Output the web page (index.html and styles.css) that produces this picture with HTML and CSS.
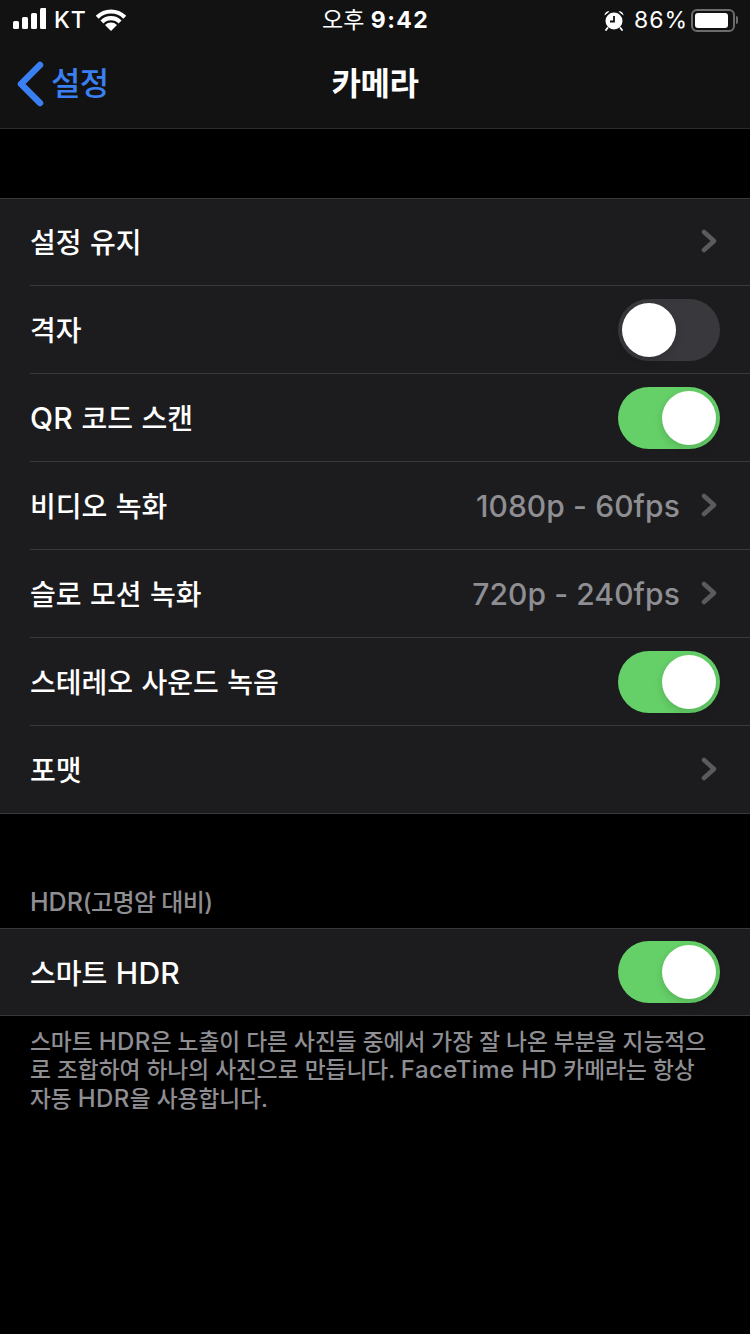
FILE: index.html
```html
<!DOCTYPE html>
<html lang="ko">
<head>
<meta charset="utf-8">
<title>카메라</title>
<link rel="stylesheet" href="styles.css">
</head>
<body>
<header class="top">
  <div class="status">
    <div class="status-left">
      <svg class="signal" width="33" height="22" viewBox="0 0 33 22"><rect x="0" y="13" width="6" height="8" rx="1.5"/><rect x="9" y="9" width="6" height="12" rx="1.5"/><rect x="18" y="5" width="6" height="16" rx="1.5"/><rect x="27" y="0" width="6.500" height="21" rx="1.5"/></svg>
      <span class="carrier">KT</span>
      <svg class="wifi" width="30" height="22" viewBox="0 0 30 22"><path class="wifi-fan" d="M15 22L9 16A8.500 8.500 0 0 1 21 16Z"/><path class="wifi-arc" d="M5.950 12.950A12.800 12.800 0 0 1 24.050 12.950"/><path class="wifi-arc" d="M1.200 8.200A19.500 19.500 0 0 1 28.800 8.200"/></svg>
    </div>
    <div class="clock">오후 <b>9:42</b></div>
    <div class="status-right">
      <svg class="alarm" width="22" height="22" viewBox="0 0 22 22"><circle cx="11" cy="12" r="8.500" fill="#fff"/><path d="M1.500 6.500a4 4 0 0 1 5-4zM20.500 6.500a4 4 0 0 0-5-4z" fill="#fff"/><path d="M4.500 19l-1.500 2M17.500 19l1.500 2" stroke="#fff" stroke-width="1.800" stroke-linecap="round"/><path d="M11 7v5.500H7" stroke="#111" stroke-width="1.800" fill="none"/></svg>
      <span class="percent">86%</span>
      <div class="battery"><div class="battery-fill"></div></div>
      <div class="battery-cap"></div>
    </div>
  </div>
  <nav class="nav">
    <a class="back">
      <svg width="28" height="46" viewBox="0 0 28 46"><path d="M24 4L5 23l19 19" fill="none" stroke="#3a80f2" stroke-width="6.500" stroke-linecap="round" stroke-linejoin="round"/></svg>
      <span>설정</span>
    </a>
    <h1 class="title">카메라</h1>
  </nav>
</header>

<section class="group first">
  <div class="row"><span class="label">설정 유지</span><svg class="chev" viewBox="0 0 18 24"><path d="M4 3l10 9-10 9" /></svg></div>
  <div class="row"><span class="label">격자</span><span class="switch"><span class="knob"></span></span></div>
  <div class="row"><span class="label"><span class="lat">QR</span> 코드 스캔</span><span class="switch on"><span class="knob"></span></span></div>
  <div class="row"><span class="label">비디오 녹화</span><span class="value">1080p - 60fps</span><svg class="chev" viewBox="0 0 18 24"><path d="M4 3l10 9-10 9" /></svg></div>
  <div class="row"><span class="label">슬로 모션 녹화</span><span class="value">720p - 240fps</span><svg class="chev" viewBox="0 0 18 24"><path d="M4 3l10 9-10 9" /></svg></div>
  <div class="row"><span class="label">스테레오 사운드 녹음</span><span class="switch on"><span class="knob"></span></span></div>
  <div class="row"><span class="label">포맷</span><svg class="chev" viewBox="0 0 18 24"><path d="M4 3l10 9-10 9" /></svg></div>
</section>

<h2 class="section-title"><span class="lat-small">HDR</span>(고명암 대비)</h2>
<section class="group">
  <div class="row single"><span class="label">스마트 <span class="lat">HDR</span></span><span class="switch on"><span class="knob"></span></span></div>
</section>
<p class="note">스마트 <span class="lat-note">HDR</span>은 노출이 다른 사진들 중에서 가장 잘 나온 부분을 지능적으로 조합하여 하나의 사진으로 만듭니다. <span class="lat-note">FaceTime HD</span> 카메라는 항상 자동 <span class="lat-note">HDR</span>을 사용합니다.</p>
</body>
</html>
```
FILE: styles.css
```css
* { box-sizing: border-box; }
html, body { margin: 0; padding: 0; }
body {
  width: 750px;
  height: 1334px;
  overflow: hidden;
  background: #000;
  color: #fff;
  font-family: Inter, "Noto Sans CJK KR", sans-serif;
}
.top {
  height: 129px;
  background: #121212;
  border-bottom: 1px solid #2c2c2e;
}
.status {
  height: 40px;
  padding: 0 0 0 13px;
  display: flex;
  align-items: center;
  position: relative;
}
.status-left { display: flex; align-items: center; }
.signal { fill: #fff; margin-top: -2px; }
.carrier { font-size: 23px; font-weight: 500; letter-spacing: 1px; margin-left: 8px; }
.wifi { margin-left: 9px; margin-top: -1px; }
.wifi-fan { fill: #fff; }
.wifi-arc { fill: none; stroke: #fff; stroke-width: 4.200px; }
.clock {
  position: absolute;
  left: 322px;
  top: 4px;
  font-size: 23px;
  line-height: 32px;
  white-space: nowrap;
}
.clock b { font-weight: 700; letter-spacing: 1.400px; }
.status-right {
  margin-left: auto;
  padding-right: 12px;
  display: flex;
  align-items: center;
}
.percent { font-size: 23px; font-weight: 400; letter-spacing: 1px; margin-left: 9px; }
.battery {
  width: 44px;
  height: 23px;
  margin-left: 3px;
  border: 2px solid #6c6c6e;
  border-radius: 6px;
  padding: 2px;
}
.battery-fill { width: 33px; height: 15px; background: #fff; border-radius: 3px; }
.battery-cap { width: 2px; height: 8px; margin-left: 1px; background: #6c6c6e; border-radius: 0 2px 2px 0; }
.nav {
  height: 88px;
  position: relative;
  display: flex;
  align-items: center;
  justify-content: center;
}
.back {
  position: absolute;
  left: 16px;
  top: 21px;
  display: flex;
  align-items: center;
  color: #3a80f2;
  font-size: 32px;
  font-weight: 500;
  line-height: 46px;
}
.back span { margin-left: 7px; letter-spacing: -0.8px; }
.title { margin: 0 0 1px; font-size: 32px; font-weight: 700; line-height: 46px; letter-spacing: -0.5px; }
.group {
  background: #1c1c1e;
  border-top: 1px solid #38383a;
  border-bottom: 1px solid #38383a;
}
.first { margin-top: 69px; }
.row {
  height: 88px;
  margin-left: 30px;
  padding-right: 30px;
  display: flex;
  align-items: center;
  border-bottom: 1px solid #38383a;
}
.row:first-child { height: 87px; }
.row:last-child { border-bottom: 0; height: 87px; }
.row.single { height: 86px; }
.label { font-size: 28px; font-weight: 500; line-height: 40px; word-spacing: 1px; margin-top: 2px; }
.lat { font-size: 30px; letter-spacing: 0.3px; }
.lat-small { font-size: 25px; letter-spacing: 0; }
.lat-note { font-size: 24px; letter-spacing: 0.4px; }
.value { margin-left: auto; font-size: 30px; font-weight: 500; letter-spacing: 0.1px; color: #8e8e93; }
.chev { width: 18px; height: 24px; margin: -2px 2px 0 20px; flex: none; }
.label + .chev { margin-left: auto; }
.chev path { fill: none; stroke: #5b5b5f; stroke-width: 4.500px; stroke-linecap: round; stroke-linejoin: round; }
.switch {
  margin-left: auto;
  width: 102px;
  height: 62px;
  border-radius: 31px;
  background: #39393d;
  padding: 4px;
  display: flex;
  flex: none;
}
.switch.on { background: #65d068; justify-content: flex-end; }
.knob { width: 54px; height: 54px; border-radius: 50%; background: #fff; box-shadow: 0 3px 8px rgba(0,0,0,.15); }
.section-title {
  margin: 72px 0 0;
  padding: 0 30px;
  height: 42px;
  font-size: 24px;
  line-height: 32px;
  font-weight: 500;
  letter-spacing: -0.6px;
  color: #8e8e93;
}
.note {
  margin: 11.500px 0 0;
  padding: 0 30px;
  font-size: 22.700px;
  line-height: 28.500px;
  font-weight: 500;
  color: #8e8e93;
}
```
